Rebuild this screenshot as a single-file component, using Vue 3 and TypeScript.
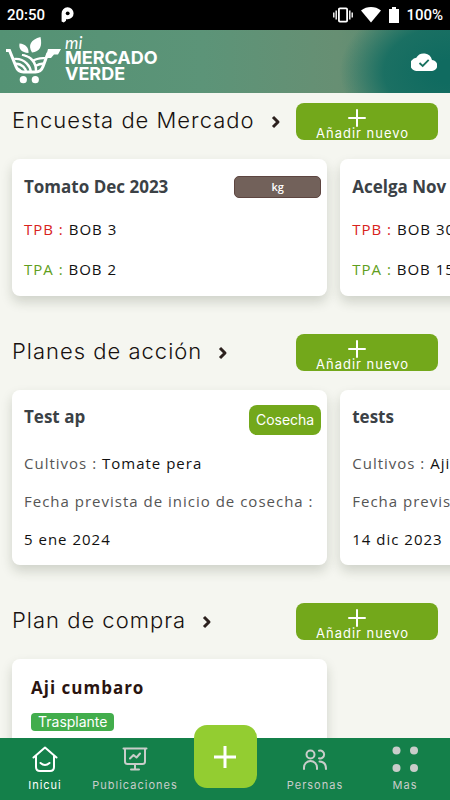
<script setup lang="ts">
interface MarketCard { title: string; unit: string; low: string; high: string }
interface PlanCard { title: string; stage: string; crop: string; date: string }

const surveys: MarketCard[] = [
  { title: 'Tomato Dec 2023', unit: 'kg', low: 'BOB 3', high: 'BOB 2' },
  { title: 'Acelga Nov', unit: 'kg', low: 'BOB 30', high: 'BOB 15' },
]
const plans: PlanCard[] = [
  { title: 'Test ap', stage: 'Cosecha', crop: 'Tomate pera', date: '5 ene 2024' },
  { title: 'tests', stage: 'Cosecha', crop: 'Aji', date: '14 dic 2023' },
]
const sections = [
  { id: 'survey', title: 'Encuesta de Mercado' },
  { id: 'plan', title: 'Planes de acción' },
  { id: 'purchase', title: 'Plan de compra' },
]
</script>

<template>
  <div class="app">
    <div class="status">
      <span class="time">20:50</span>
      <svg class="parking" width="14" height="16" viewBox="0 0 14 16">
        <path d="M.6 14.500V6.500a6 6 0 1 1 6 5.800H5v1.500l-2.200 1.700z" fill="#fff" />
        <circle cx="6.700" cy="6.300" r="1.900" fill="#000" />
      </svg>
      <div class="signals">
        <svg width="20" height="16" viewBox="0 0 20 16" fill="none" stroke="#fff">
          <rect x="5.900" y="1.400" width="8.200" height="13.200" rx="1" stroke-width="1.800" />
          <path d="M3.200 3.500v9M16.800 3.500v9M.8 5.500v5M19.200 5.500v5" stroke-width="1.400" />
        </svg>
        <svg class="wifi" width="20" height="16" viewBox="0 0 20 16">
          <path d="M0 3.500C6-1.100 14-1.100 20 3.500L10 15.500z" fill="#fff" />
        </svg>
        <svg class="battery" width="10" height="18" viewBox="0 0 10 18">
          <path d="M3 1h4v2h3v14H0V3h3z" fill="#fff" />
        </svg>
        <span>100%</span>
      </div>
    </div>

    <header class="banner">
      <div class="brand">
        <svg width="55" height="50" viewBox="0 0 55 50" fill="none" stroke="#fff">
          <clipPath id="basket"><path d="M7 18Q15 15 23.500 19Q32 15 40 18L36 30Q34 35 29 35H18Q13 35 11 30z" /></clipPath>
          <path d="M0 13.500H3.500L10 29.500Q12 35 17.500 35H29.500Q35 35 37 29.500L42 16" stroke-width="3" />
          <path d="M42 12H55L52 17.500H48L45 21H39.500z" fill="#fff" stroke="none" />
          <g clip-path="url(#basket)" stroke-width="2.400">
            <circle cx="10" cy="37" r="5.500" /><circle cx="10" cy="37" r="10.300" /><circle cx="10" cy="37" r="15.100" />
            <path d="M16 17.500Q31 21 30 36M26 24.500Q32 20 42 21.500M29 29.500Q33 26 42 26.500" />
          </g>
          <path d="M26 15.500C21.500 8 25 2.500 34.500 0C36.500 9.500 34 14.500 26 15.500zM22.500 16C15.500 15.500 12.500 12 13.500 6.500C19.500 7 23 10.500 22.500 16z" fill="#fff" stroke="none" />
          <g fill="#fff" stroke="none"><circle cx="17.300" cy="42.700" r="3.600" /><circle cx="29.300" cy="42.700" r="3.600" /></g>
        </svg>
        <div class="wordmark">
          <span class="mi">mi</span>
          <span>MERCADO</span>
          <span>VERDE</span>
        </div>
      </div>
      <svg width="26" height="18" viewBox="0 0 26 18">
        <path d="M21 7A8.500 8.500 0 0 0 5.300 4.800 6.600 6.600 0 0 0 6.500 18H20.500A5.500 5.500 0 0 0 21 7z" fill="#fff" />
        <path d="M8.500 10l3.200 3 6-6.200" fill="none" stroke="#17715f" stroke-width="1.800" />
      </svg>
    </header>

    <main class="content">
      <section v-for="s in sections" :key="s.id" class="section">
        <div class="heading">
          <h2><a href="#">{{ s.title }}
            <svg width="10" height="14" viewBox="0 0 10 14"><path d="M2 2l5 5-5 5" fill="none" stroke="#2c211e" stroke-width="3" stroke-linejoin="round" /></svg>
          </a></h2>
          <button class="add">
            <svg width="18" height="18" viewBox="0 0 18 18"><path d="M9 1v16M1 9h16" stroke="#fff" stroke-width="2" stroke-linecap="round" /></svg>
            <span>Añadir nuevo</span>
          </button>
        </div>

        <div v-if="s.id === 'survey'" class="cards">
          <article v-for="c in surveys" :key="c.title" class="card survey">
            <div class="top"><h3>{{ c.title }}</h3><span class="unit">{{ c.unit }}</span></div>
            <p><span class="red">TPB :</span> {{ c.low }}</p>
            <p><span class="green">TPA :</span> {{ c.high }}</p>
          </article>
        </div>
        <div v-else-if="s.id === 'plan'" class="cards">
          <article v-for="c in plans" :key="c.title" class="card plan">
            <div class="top"><h3>{{ c.title }}</h3><span class="stage">{{ c.stage }}</span></div>
            <p><span class="label">Cultivos :</span> {{ c.crop }}</p>
            <p><span class="label">Fecha prevista de inicio de cosecha :</span></p>
            <p>{{ c.date }}</p>
          </article>
        </div>
        <div v-else class="cards">
          <article class="card purchase">
            <h3>Aji cumbaro</h3>
            <span class="tag">Trasplante</span>
          </article>
        </div>
      </section>
    </main>

    <nav class="tabs">
      <a href="#" class="active">
        <svg width="26" height="26" viewBox="0 0 26 26" fill="none" stroke="currentColor" stroke-width="2" stroke-linecap="round" stroke-linejoin="round">
          <path d="M1.500 11.500L13 1.500l11.500 10M4 10v11q0 4 4 4h10q4 0 4-4V10M8.500 17q4.500 4 9 0" />
        </svg>
        <span>Inicui</span>
      </a>
      <a href="#">
        <svg width="26" height="26" viewBox="0 0 26 26" fill="none" stroke="currentColor" stroke-width="2" stroke-linecap="round" stroke-linejoin="round">
          <path d="M1.500 2.500h23M3 2.500v13q0 2.500 2.500 2.500h15q2.500 0 2.500-2.500v-13M13 18v5.500M9 23.500h8M8 12.500l3.500-3.500 3 2.500L18 7.500" />
        </svg>
        <span>Publicaciones</span>
      </a>
      <button class="create" aria-label="+">
        <svg width="24" height="24" viewBox="0 0 24 24"><path d="M12 1v22M1 12h22" stroke="#fff" stroke-width="3" /></svg>
      </button>
      <a href="#">
        <svg width="26" height="26" viewBox="0 0 26 26" fill="none" stroke="currentColor" stroke-width="2" stroke-linecap="round">
          <circle cx="8.500" cy="8.500" r="4" />
          <path d="M2 23v-1.500a6.500 6.500 0 0 1 13 0V23M17 4.800a3.900 3.900 0 1 1 0 7.400M17.500 15.500q6.500 0 6.500 7.500" />
        </svg>
        <span>Personas</span>
      </a>
      <a href="#">
        <svg width="26" height="26" viewBox="0 0 26 26" fill="currentColor">
          <circle cx="4.500" cy="4.500" r="4" /><circle cx="22" cy="4.500" r="4" /><circle cx="4.500" cy="22" r="4" /><circle cx="22" cy="22" r="4" />
        </svg>
        <span>Mas</span>
      </a>
    </nav>
  </div>
</template>

<style>
body { margin: 0; }
</style>

<style scoped>
* { box-sizing: border-box; }
.app { height: 100vh; display: flex; flex-direction: column; background: #f5f6f0; overflow: hidden; font-family: "Open Sans", sans-serif; color: #111; }
a { color: inherit; text-decoration: none; }
h2, h3, p { margin: 0; }
svg { display: block; flex: none; }
button { border: 0; padding: 0; cursor: pointer; }

.status { flex: none; height: 30px; display: flex; align-items: center; padding: 0 7px; background: #000; color: #fff; font: 500 15px/30px Roboto, sans-serif; }
.parking { margin-left: 16px; }
.signals { margin-left: auto; display: flex; align-items: center; }
.wifi { margin: 0 8px; }
.battery { margin-right: 7px; }

.banner { flex: none; height: 63px; display: flex; align-items: center; justify-content: space-between; padding: 0 13px 0 6px;
  background: radial-gradient(ellipse 110px 76px at 100% 66%, #106b60 0 15%, rgba(16, 107, 96, .85) 60%, rgba(16, 107, 96, 0) 100%), linear-gradient(to right, #549274 0%, #5c9478 45%, #678f73 75%, #4c8670 100%); }
.brand { display: flex; align-items: center; gap: 4px; }
.wordmark { display: flex; flex-direction: column; padding-bottom: 6px; color: #fff; font: 700 18px/16px Inter, sans-serif; }
.wordmark .mi { font: italic 400 17px/14px Lato, sans-serif; }

.content { flex: 1; min-height: 0; overflow: hidden; padding: 10px 12px 0; display: flex; flex-direction: column; gap: 38px; }
.section { flex: none; display: flex; flex-direction: column; gap: 19px; }
.heading { display: flex; justify-content: space-between; align-items: flex-start; }
h2 { font: 300 22px/34px Inter, sans-serif; letter-spacing: 1px; color: #17110f; }
h2 a { display: flex; align-items: center; gap: 16px; }
h2 svg { margin-top: 4px; }
.add { width: 142px; height: 37px; border-radius: 8px; background: #73a81b; color: #fff; overflow: hidden; display: flex; flex-direction: column; align-items: center; padding: 6px 20px 0; }
.add svg { margin-right: 20px; }
.add span { align-self: flex-start; font: 400 13px/13px Inter, sans-serif; letter-spacing: 1px; white-space: nowrap; }

.cards { display: flex; gap: 13px; }
.card { flex: none; width: 74%; background: #fff; border-radius: 8px; box-shadow: 0 6px 12px rgba(40, 50, 30, .18); white-space: nowrap; }
.survey { padding: 16px 6px 7px 12px; }
.plan { padding: 15px 6px 7px 12px; }
.top { display: flex; justify-content: space-between; align-items: flex-start; }
h3 { font: 700 17px/24px "Open Sans", sans-serif; color: #3b4146; }
.unit { width: 87px; height: 22px; margin-top: 1px; border-radius: 5px; background: #72615a; border: 1px solid #5d4540; color: #fff; font: 600 11px/19px "Open Sans", sans-serif; text-align: center; }
.stage { padding: 0 7px; border-radius: 8px; background: #73a81b; color: #fff; font: 400 14px/30px Inter, sans-serif; }
p { font-size: 15px; letter-spacing: 1px; }
.survey p { line-height: 40px; }
.survey .top { margin-bottom: 10px; }
.red { color: #d8231d; }
.green { color: #5f9e20; }
.plan p { line-height: 38px; }
.plan .top { margin-bottom: 9px; }
.label { color: #555; }
.purchase { padding: 16px 19px 40px; }
.purchase h3 { letter-spacing: 1px; line-height: 26px; color: #2a1410; margin-bottom: 9px; }
.tag { display: inline-block; padding: 0 7px; border-radius: 4px; background: #42ad4c; color: #fff; font: 400 14px/18px Inter, sans-serif; }

.tabs { flex: none; height: 62px; display: grid; grid-template-columns: repeat(5, 1fr); background: #14804a; color: #c9cdca; }
.tabs a { display: flex; flex-direction: column; align-items: center; gap: 5px; padding-top: 8px; font: 400 11px/16px Inter, sans-serif; letter-spacing: 1px; }
.tabs .active { color: #fff; }
.create { justify-self: center; width: 63px; height: 63px; margin-top: -13px; border-radius: 13px; background: #93cd31; display: grid; place-items: center; position: relative; }
</style>
